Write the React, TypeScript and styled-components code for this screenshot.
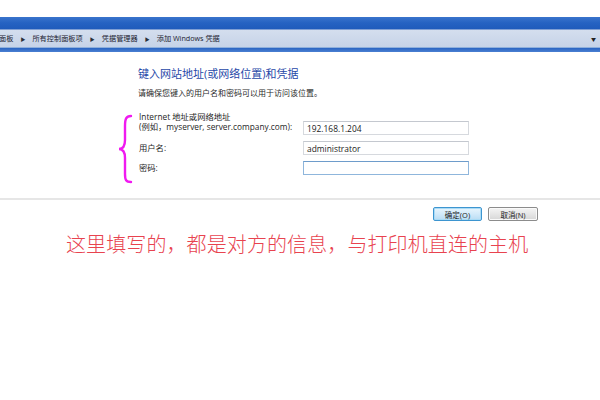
import { Fragment } from 'react';
import styled, { createGlobalStyle } from 'styled-components';

const GlobalStyle = createGlobalStyle`
    html, body {
        margin: 0;
        padding: 0;
        background: #ffffff;
    }
    body {
        width: 600px;
        height: 400px;
        overflow: hidden;
        font-family: 'Open Sans', 'Noto Sans CJK SC', sans-serif;
        color: #1e1e1e;
    }
`;

// haut de la fenêtre -------------->
const TopSpace = styled.div`
    height: 17px;
`;
const TitleBand = styled.div`
    height: 12px;
    background: linear-gradient(180deg, #3a74cc 0%, #2562c2 50%, #1f5bbb 100%);
`;
const AddressBar = styled.div`
    height: 17px;
    display: flex;
    align-items: center;
    gap: 7px;
    padding: 0 4px 0 0;
    margin-left: -1px;
    background: linear-gradient(180deg, #d4deee 0%, #c6d3e8 100%);
    border-top: 1px solid #7f9fd4;
    border-bottom: 1px solid #8fb0dc;
    font-size: 7.2px;
    color: #1b2230;
    white-space: nowrap;
`;
const Crumb = styled.span`
    line-height: 17px;
`;
const CrumbArrow = styled.span`
    font-size: 5px;
    color: #2a2f3a;
`;
const Drop = styled.span`
    margin-left: auto;
    font-size: 5px;
    color: #222;
`;
const BottomBand = styled.div`
    height: 4px;
    background: linear-gradient(180deg, #2a64c2, #4a80d2);
`;

// contenu -------------->
const Content = styled.div`
    padding: 15px 0 0 138px;
`;
const Heading = styled.div`
    font-size: 11px;
    line-height: 14px;
    color: #1f48a8;
`;
const SubText = styled.div`
    margin-top: 6px;
    font-size: 8px;
    line-height: 11px;
    color: #2a2a2a;
`;
const Form = styled.div`
    position: relative;
    margin: 14px 0 0 1px;
    display: flex;
    flex-direction: column;
    gap: 6px;
`;
const Row = styled.div<{ $tall?: boolean }>`
    display: grid;
    grid-template-columns: 164px 166px;
    align-items: ${(p) => (p.$tall ? 'end' : 'center')};
`;
const Label = styled.div<{ $tall?: boolean }>`
    font-size: 8.3px;
    line-height: 10px;
    color: #1e1e1e;
    padding-bottom: ${(p) => (p.$tall ? '3px' : '0')};
    white-space: nowrap;
`;
const Field = styled.div<{ $focus?: boolean }>`
    box-sizing: border-box;
    height: 14px;
    padding: 0 3px;
    display: flex;
    align-items: center;
    font-size: 8.4px;
    color: #1a1a1a;
    background: #ffffff;
    border: 1px solid ${(p) => (p.$focus ? '#8fb6dc' : '#d6d9de')};
    border-top-color: ${(p) => (p.$focus ? '#6e9ccb' : '#c4c8cf')};
`;
const Brace = styled.svg`
    position: absolute;
    left: -22px;
    top: 2px;
    width: 16px;
    height: 70px;
`;
const Separator = styled.div`
    margin-top: 23px;
    height: 2px;
    background: #e6e6e6;
`;
const Buttons = styled.div`
    display: flex;
    justify-content: flex-end;
    gap: 6px;
    padding: 7px 62px 0 0;
`;
const WinButton = styled.div<{ $primary?: boolean }>`
    box-sizing: border-box;
    width: ${(p) => (p.$primary ? '49px' : '50px')};
    height: 14px;
    display: flex;
    align-items: center;
    justify-content: center;
    font-size: 7.5px;
    color: #1a1a1a;
    border-radius: 2px;
    border: 1px solid ${(p) => (p.$primary ? '#3d95d0' : '#8c8c8c')};
    background: ${(p) =>
        p.$primary
            ? 'linear-gradient(180deg, #e9f5fd 0%, #d2eafa 50%, #b9dcf3 100%)'
            : 'linear-gradient(180deg, #f4f4f4 0%, #e6e6e6 50%, #d6d6d6 100%)'};
    box-shadow: inset 0 0 0 1px ${(p) => (p.$primary ? '#a9dbf6' : '#fafafa')};
`;
const Note = styled.div`
    margin: 10px 0 0 66px;
    font-family: 'Noto Sans CJK SC', sans-serif;
    font-weight: 300;
    font-size: 20px;
    line-height: 26px;
    color: #e8434f;
    letter-spacing: 0.1px;
`;

export default function App() {
    const crumbs = ['面板', '所有控制面板项', '凭据管理器', '添加 Windows 凭据'];
    return (
        <>
            <GlobalStyle />
            <TopSpace />
            <TitleBand />
            <AddressBar>
                {crumbs.map((c, i) => (
                    <Fragment key={c}>
                        {i > 0 && <CrumbArrow>▶</CrumbArrow>}
                        <Crumb>{c}</Crumb>
                    </Fragment>
                ))}
                <Drop>▼</Drop>
            </AddressBar>
            <BottomBand />
            <Content>
                <Heading>键入网站地址(或网络位置)和凭据</Heading>
                <SubText>请确保您键入的用户名和密码可以用于访问该位置。</SubText>
                <Form>
                    <Brace viewBox="0 0 16 70">
                        <path
                            d="M14 2 C9 2 8 5 8 12 L8 26 C8 32 6 35 2 35 C6 35 8 38 8 44 L8 60 C8 66 9 68 14 68"
                            fill="none"
                            stroke="#f01af0"
                            strokeWidth="2.4"
                            strokeLinecap="round"
                        />
                    </Brace>
                    <Row $tall>
                        <Label $tall>
                            Internet 地址或网络地址
                            <br />
                            (例如，myserver, server.company.com):
                        </Label>
                        <Field>192.168.1.204</Field>
                    </Row>
                    <Row>
                        <Label>用户名:</Label>
                        <Field>administrator</Field>
                    </Row>
                    <Row>
                        <Label>密码:</Label>
                        <Field $focus />
                    </Row>
                </Form>
            </Content>
            <Separator />
            <Buttons>
                <WinButton $primary>确定(O)</WinButton>
                <WinButton>取消(N)</WinButton>
            </Buttons>
            <Note>这里填写的，都是对方的信息，与打印机直连的主机</Note>
        </>
    );
}
